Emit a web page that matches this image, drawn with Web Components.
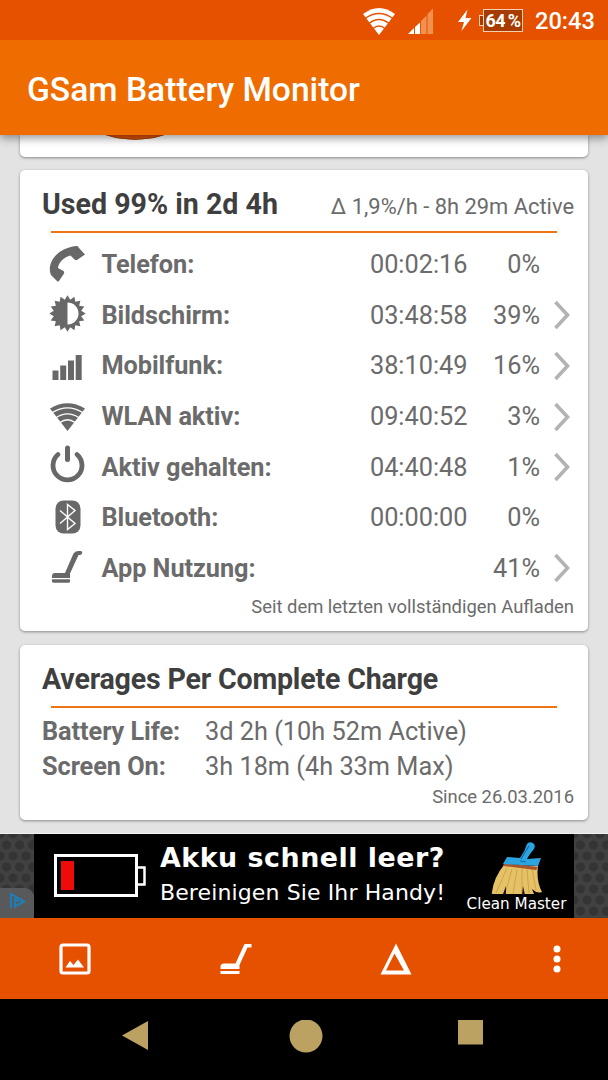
<!DOCTYPE html>
<html lang="de">
<head>
<meta charset="utf-8">
<title>GSam Battery Monitor</title>
<style>
    html, body {
        margin: 0;
        height: 100%;
    }
    body {
        width: 608px;
        height: 1080px;
        overflow: hidden;
        background: #e3e3e3;
        font-family: Roboto, "Liberation Sans", sans-serif;
        color: #6b6b6b;
    }
</style>
</head>
<body>

<battery-app>
    <card-panel class="peek"><charge-gauge></charge-gauge></card-panel>

    <card-panel class="usage" heading="Used 99% in 2d 4h" note="Δ 1,9%/h - 8h 29m Active" footer="Seit dem letzten vollständigen Aufladen">
        <usage-row icon="phone" label="Telefon:" time="00:02:16" percent="0%"></usage-row>
        <usage-row icon="screen" label="Bildschirm:" time="03:48:58" percent="39%" more></usage-row>
        <usage-row icon="signal" label="Mobilfunk:" time="38:10:49" percent="16%" more></usage-row>
        <usage-row icon="wifi" label="WLAN aktiv:" time="09:40:52" percent="3%" more></usage-row>
        <usage-row icon="power" label="Aktiv gehalten:" time="04:40:48" percent="1%" more></usage-row>
        <usage-row icon="bluetooth" label="Bluetooth:" time="00:00:00" percent="0%"></usage-row>
        <usage-row icon="apps" label="App Nutzung:" time="" percent="41%" more></usage-row>
    </card-panel>

    <card-panel class="averages" heading="Averages Per Complete Charge" footer="Since 26.03.2016">
        <average-row label="Battery Life:">3d 2h (10h 52m Active)</average-row>
        <average-row label="Screen On:">3h 18m (4h 33m Max)</average-row>
    </card-panel>
</battery-app>

<script>
// icons are drawn in the 40x40 box at the left of each usage row
const icons = {
    phone: '<path d="M3 27 C1 13 15 2 30 1 Q31 1 32 3 L38 9.500 L30 15 Q28.500 15.500 27.500 14.500 L23.500 10.500 C17 12 11.500 17.500 11 23 L16.500 26 Q17.500 27 17 28.500 L12 36 Q11 37 10 36 L4 30 Z"/>',
    screen: '',
    signal: '<path d="M5.500 24.500h6v9.500h-6zM13.200 19.500h6v14.500h-6zM21 14.500h6v19.500h-6zM28.700 9h6v25h-6z"/>',
    wifi: '<path d="M3 11.500 Q20.500 1 38 11.500 L20.500 34 Z"/><g fill="none" stroke="#fff" stroke-width="1.300"><path d="M5 15.800 Q20.500 6 36 15.800"/><path d="M9 20.800 Q20.500 13 32 20.800"/><path d="M13 25.500 Q20.500 20 28 25.500"/></g>',
    power: '<path d="M11 7.500 A14.500 14.500 0 1 0 30 7.500" fill="none" stroke="currentColor" stroke-width="4.800" stroke-linecap="round"/><path d="M20.500 1v11.500" stroke="currentColor" stroke-width="5" stroke-linecap="round"/>',
    bluetooth: '<rect x="8.500" y="2.500" width="25" height="33" rx="8"/><path d="M13 12.500 L28 25.500 L20.500 31.500 V6.500 L28 12.500 L13 25.500" fill="none" stroke="#fff" stroke-width="1.400"/>',
    apps: '<path d="M5 28 Q5 25 8 25 H18 L26.500 5.500 Q28 3 31 3 H34 Q35.500 3.500 35.300 5 Q34.500 7 33 7 H31.500 L23 25.500 V30 H5 Z"/><path d="M5 31.200h18v2q0 1.500-2 1.500h-14q-2 0-2-1.500z"/>'
};

// brightness symbol: 16 teeth round a half filled disc
let teeth = '';
for (let i = 0; i < 32; i++) {
    const r = i % 2 ? 14 : 18.2;
    const a = i * Math.PI / 16;
    teeth += (20.5 + r * Math.sin(a)).toFixed(2) + ',' + (18.5 - r * Math.cos(a)).toFixed(2) + ' ';
}
icons.screen = `<polygon points="${teeth}"/><path d="M20.500 7.500a11 11 0 0 1 0 22z" fill="#fff"/>`;


class BatteryApp extends HTMLElement {
    constructor() {
        super();
        this.attachShadow({ mode: 'open' }).innerHTML = `
        <style>
            :host {
                display: flex;
                flex-direction: column;
                height: 1080px;
            }
            main {
                flex: 1;
                min-height: 0;
                padding: 0 20px;
                overflow: hidden;
                background: #e3e3e3;
            }
        </style>
        <status-bar></status-bar>
        <app-bar>GSam Battery Monitor</app-bar>
        <main><slot></slot></main>
        <ad-banner></ad-banner>
        <tool-bar></tool-bar>
        <nav-bar></nav-bar>
        `;
    }
}


class StatusBar extends HTMLElement {
    constructor() {
        super();
        this.attachShadow({ mode: 'open' }).innerHTML = `
        <style>
            :host {
                display: flex;
                justify-content: flex-end;
                align-items: center;
                position: relative;
                z-index: 2;
                height: 40px;
                padding-right: 13px;
                box-sizing: border-box;
                background: #e65100;
                color: #fff;
            }
            svg { display: block; }
            .signal { margin-left: 13px; }
            .bolt { margin-left: 24px; }
            .battery {
                display: flex;
                align-items: center;
                margin-left: 7px;
            }
            .battery i {
                width: 3px;
                height: 9px;
                border: 1px solid #f6cfb4;
                border-right: 0;
                background: #a63c00;
            }
            .battery b {
                width: 38px;
                height: 21px;
                border: 1px solid #f6cfb4;
                background: #a63c00;
                font-size: 18px;
                line-height: 21px;
                text-align: center;
                letter-spacing: -.6px;
                word-spacing: -1px;
                white-space: nowrap;
            }
            time {
                width: 60px;
                margin-left: 12px;
                font-size: 23.600px;
                font-weight: 500;
                line-height: 42px;
                padding-top: 2px;
                white-space: nowrap;
            }
        </style>
        <svg width="32" height="40" viewBox="0 0 32 40">
            <path d="M0 14Q16 2 32 14L16 35Z" fill="#fff"/>
            <g fill="none" stroke="#e65100" stroke-width="1.400">
                <path d="M2 18.500Q16 8.500 30 18.500M6 23.500Q16 15.500 26 23.500M10 28.500Q16 23.500 22 28.500"/>
            </g>
        </svg>
        <svg class="signal" width="26" height="40" viewBox="0 0 26 40">
            <path d="M0 34L6 28V34ZM7 27L12 22.500V34H7Z" fill="#fff"/>
            <path d="M13 21L18.500 15.500V34H13ZM19.500 14L25 8.500V34H19.500Z" fill="#f2904e"/>
        </svg>
        <svg class="bolt" width="14" height="40" viewBox="0 0 14 40">
            <path d="M9.500 9.500L0 22H6L3.500 31L13.500 18H7.500Z" fill="#fff"/>
        </svg>
        <span class="battery"><i></i><b>64 %</b></span>
        <time>20:43</time>
        `;
    }
}


class AppBar extends HTMLElement {
    constructor() {
        super();
        this.attachShadow({ mode: 'open' }).innerHTML = `
        <style>
            :host {
                display: flex;
                align-items: center;
                position: relative;
                z-index: 1;
                height: 95px;
                padding: 4px 27px 0;
                box-sizing: border-box;
                background: #ef6c00;
                box-shadow: 0 3px 9px rgba(0, 0, 0, .42);
                color: #fff;
            }
            h1 {
                margin: 0;
                font-size: 33.600px;
                font-weight: 500;
                white-space: nowrap;
            }
        </style>
        <h1><slot></slot></h1>
        `;
    }
}


class CardPanel extends HTMLElement {
    constructor() {
        super();
        const heading = this.getAttribute('heading');
        const note = this.getAttribute('note') || '';
        const footer = this.getAttribute('footer');

        this.attachShadow({ mode: 'open' }).innerHTML = `
        <style>
            :host {
                display: block;
                box-sizing: border-box;
                margin-bottom: 14px;
                border-radius: 5px;
                background: #fff;
                box-shadow: 0 1px 3px rgba(0, 0, 0, .4);
            }
            :host(.peek) { height: 21.500px; border-radius: 0 0 5px 5px; margin-bottom: 13.500px; }
            :host(.usage) { height: 461px; }
            :host(.averages) { height: 175px; }
            :host(.usage) hr { margin-bottom: 6.500px; }
            :host(.averages) h2 { letter-spacing: -.19px; }
            :host(.averages) footer { padding-top: 6.500px; }
            header {
                display: flex;
                justify-content: space-between;
                align-items: baseline;
                height: 61px;
                margin: 0 14px 0 22px;
                line-height: 69px;
                white-space: nowrap;
            }
            h2 {
                margin: 0;
                font-size: 28.600px;
                font-weight: 700;
                color: #3f3f3f;
            }
            header span { font-size: 21.900px; }
            hr {
                height: 2px;
                margin: 0 31px;
                border: 0;
                background: #ef7414;
            }
            footer {
                margin-right: 14px;
                font-size: 18.400px;
                line-height: 25px;
                text-align: right;
            }
        </style>
        ${heading ? `<header><h2>${heading}</h2><span>${note}</span></header><hr>` : ''}
        <slot></slot>
        ${footer ? `<footer>${footer}</footer>` : ''}
        `;
    }
}


// only the lowest edge of the gauge is still on screen
class ChargeGauge extends HTMLElement {
    constructor() {
        super();
        this.attachShadow({ mode: 'open' }).innerHTML = `
        <style>
            :host { display: block; height: 6px; }
            svg { display: block; margin-left: 75px; }
        </style>
        <svg width="80" height="6" viewBox="0 0 80 6">
            <path d="M2 -3Q40 12 78 -3Z" fill="#e05206"/>
            <path d="M2 -3Q40 12 78 -3" fill="none" stroke="#aa4410"/>
        </svg>
        `;
    }
}


class UsageRow extends HTMLElement {
    constructor() {
        super();
        this.attachShadow({ mode: 'open' }).innerHTML = `
        <style>
            :host {
                display: flex;
                align-items: center;
                height: 50.600px;
                padding: 0 15px 0 27px;
                font-size: 25.300px;
                white-space: nowrap;
            }
            .icon {
                flex: none;
                color: #686868;
                overflow: visible;
            }
            b { flex: 1; margin-left: 14.500px; letter-spacing: -.06px; }
            .percent { width: 72.500px; text-align: right; }
            .more { width: 19px; margin-left: 14px; flex: none; }
        </style>
        <svg class="icon" width="40" height="40" viewBox="0 0 40 40" fill="currentColor">${icons[this.getAttribute('icon')]}</svg>
        <b>${this.getAttribute('label')}</b>
        <span>${this.getAttribute('time')}</span>
        <span class="percent">${this.getAttribute('percent')}</span>
        <svg class="more" width="19" height="32" viewBox="0 0 19 32">
            ${this.hasAttribute('more') ? '<path d="M1.500 3L13.500 16L1.500 29" fill="none" stroke="#b3b3b3" stroke-width="3.600"/>' : ''}
        </svg>
        `;
    }
}


class AverageRow extends HTMLElement {
    constructor() {
        super();
        this.attachShadow({ mode: 'open' }).innerHTML = `
        <style>
            :host {
                display: flex;
                height: 34.500px;
                padding-left: 22px;
                font-size: 25.300px;
                line-height: 47px;
                white-space: nowrap;
            }
            b { width: 163px; letter-spacing: -.06px; }
        </style>
        <b>${this.getAttribute('label')}</b>
        <span><slot></slot></span>
        `;
    }
}


class AdBanner extends HTMLElement {
    constructor() {
        super();
        this.attachShadow({ mode: 'open' }).innerHTML = `
        <style>
            :host {
                display: flex;
                height: 84px;
                overflow: hidden;
                border-top: 1px solid #f2f2f2;
                background: #000;
                color: #fff;
                font-family: "DejaVu Sans", sans-serif;
                white-space: nowrap;
            }
            .side {
                display: flex;
                flex: none;
                align-items: flex-end;
                width: 34px;
                background-color: #414141;
                background-image:
                    radial-gradient(circle, #343434 4px, transparent 5px),
                    radial-gradient(circle, #343434 4px, transparent 5px);
                background-size: 13px 22px;
                background-position: 0 0, 6.500px 11px;
            }
            .choices {
                width: 34px;
                height: 30px;
                border-radius: 0 9px 0 0;
                background: #58595a;
            }
            .banner {
                display: flex;
                width: 540px;
            }
            .low { flex: none; margin: 20px 0 0 20px; }
            .text { flex: none; margin-left: 14px; width: 299px; }
            .text b {
                display: block;
                height: 41px;
                font-size: 26.900px;
                line-height: 48px;
                letter-spacing: .5px;
            }
            .text span {
                display: block;
                font-size: 22px;
                line-height: 35px;
                letter-spacing: .12px;
            }
            .brand {
                display: flex;
                flex: none;
                flex-direction: column;
                align-items: center;
                width: 115px;
                padding-top: 7px;
                font-size: 15.200px;
                line-height: 18px;
            }
        </style>
        <div class="side">
            <svg class="choices" viewBox="0 0 34 30">
                <path d="M11 20V6L24 13.500L15 18.500V11L19 13.500" fill="none" stroke="#1583c6" stroke-width="1.800"/>
            </svg>
        </div>
        <div class="banner">
            <svg class="low" width="92" height="44" viewBox="0 0 92 44">
                <rect x="1.500" y="1.500" width="81" height="40" fill="none" stroke="#fff" stroke-width="3"/>
                <path d="M83 13.500H90.500V30.500H83" fill="none" stroke="#fff" stroke-width="2.500"/>
                <rect x="7" y="7" width="13" height="29" fill="#f00b0b"/>
            </svg>
            <div class="text">
                <b>Akku schnell leer?</b>
                <span>Bereinigen Sie Ihr Handy!</span>
            </div>
            <div class="brand">
                <svg width="54" height="54" viewBox="0 0 54 54">
                    <path d="M14 24Q4 36 2 51Q1 53 3 53H44L42 48Q47 53 52 51Q46 40 48 25Z" fill="#e6c266"/>
                    <path d="M17 27L6 52M22 28L15 53M27 28L23 53M32 28V53M37 28L39 52M42 28L46 49" fill="none" stroke="#c79a4b" stroke-width=".8"/>
                    <path d="M13 53L16 45V54M32 54L33 45L35 54" fill="#1c1408"/>
                    <path d="M14 22L48 26L46 29L13 25Z" fill="#a9542c"/>
                    <path d="M17 16L30 17Q35 10 37 3Q39 0 43 2Q46 4 44 8Q39 14 37 18L51 17L48 25L13 23Z" fill="#2ba4e2"/>
                    <path d="M39 5L31 18M30 20l6 1" fill="none" stroke="#136da5" stroke-width="1.200"/>
                </svg>
                <span>Clean Master</span>
            </div>
        </div>
        <div class="side"></div>
        `;
    }
}


class ToolBar extends HTMLElement {
    constructor() {
        super();
        this.attachShadow({ mode: 'open' }).innerHTML = `
        <style>
            :host {
                display: flex;
                justify-content: space-between;
                align-items: center;
                height: 81px;
                padding: 0 35px 0 59px;
                background: #e65100;
            }
        </style>
        <svg width="32" height="32" viewBox="0 0 32 32">
            <rect x="2" y="2" width="28" height="28" rx="2" fill="none" stroke="#fff" stroke-width="3.200"/>
            <path d="M6.500 24.500L11 18L14.500 22L19 16.500L25 24.500Z" fill="#fff"/>
        </svg>
        <svg width="32" height="32" viewBox="0 0 32 32">
            <path d="M.500 26V23Q1 20.500 4 20.500H15.500L24.500 1H31.500V4.500H27.500L19.500 22V26ZM.500 28H19.500V31H.500Z" fill="#fff"/>
        </svg>
        <svg width="32" height="32" viewBox="0 0 32 32">
            <path d="M16 .500L31.500 31.500H.500ZM14.500 10.500L6 27.500H24Z" fill="#fff" fill-rule="evenodd"/>
        </svg>
        <svg width="32" height="28" viewBox="0 0 32 28" fill="#fff">
            <circle cx="16" cy="4" r="3.500"/><circle cx="16" cy="14" r="3.500"/><circle cx="16" cy="24" r="3.500"/>
        </svg>
        `;
    }
}


class NavBar extends HTMLElement {
    constructor() {
        super();
        this.attachShadow({ mode: 'open' }).innerHTML = `
        <style>
            :host {
                display: flex;
                height: 81px;
                padding: 21px 124px 0 122px;
                box-sizing: border-box;
                justify-content: space-between;
                background: #000;
            }
            .home { margin-left: 5px; }
        </style>
        <svg width="26" height="30" viewBox="0 0 26 30"><path d="M0 15.500L26 1V30Z" fill="#bba263"/></svg>
        <svg class="home" width="34" height="34" viewBox="0 0 34 34"><circle cx="17" cy="16" r="16.500" fill="#bba263"/></svg>
        <svg width="26" height="26" viewBox="0 0 26 26"><path d="M0 0H25V24.500H0Z" fill="#bba263"/></svg>
        `;
    }
}


window.customElements.define('battery-app', BatteryApp);
window.customElements.define('status-bar', StatusBar);
window.customElements.define('app-bar', AppBar);
window.customElements.define('card-panel', CardPanel);
window.customElements.define('charge-gauge', ChargeGauge);
window.customElements.define('usage-row', UsageRow);
window.customElements.define('average-row', AverageRow);
window.customElements.define('ad-banner', AdBanner);
window.customElements.define('tool-bar', ToolBar);
window.customElements.define('nav-bar', NavBar);
</script>
</body>
</html>
